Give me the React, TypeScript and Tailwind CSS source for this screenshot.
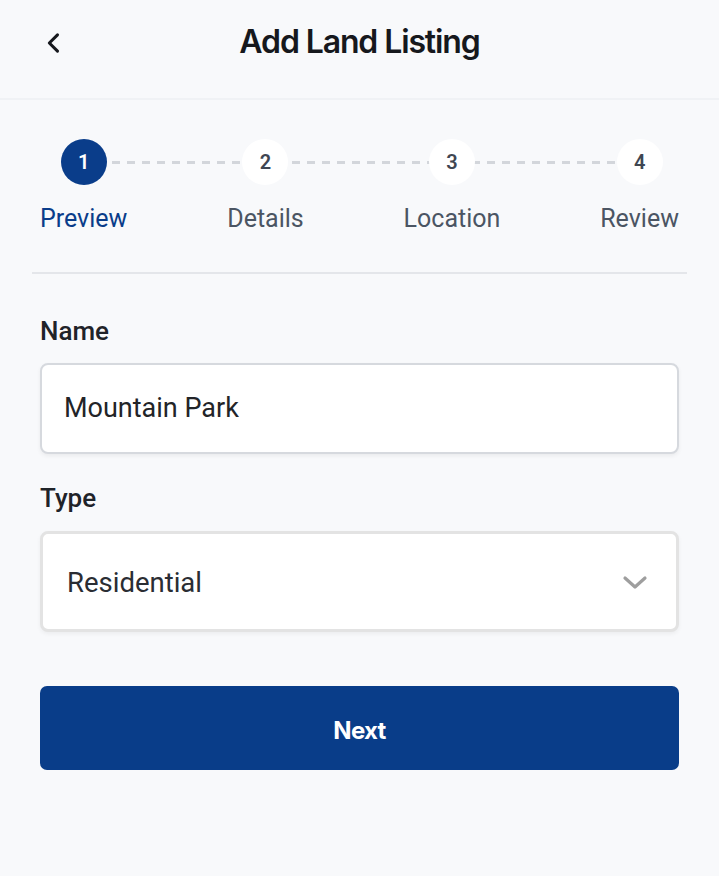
import React from "react";

const steps = [
  { n: 1, label: "Preview", active: true },
  { n: 2, label: "Details", active: false },
  { n: 3, label: "Location", active: false },
  { n: 4, label: "Review", active: false },
];

export default function App() {
  return (
    <div className="min-h-[876px] w-full bg-[#f8f9fb] font-['Roboto',_sans-serif] text-[#1f2329]">
      {/* Header */}
      <header className="relative flex h-[100px] items-center justify-center border-b-2 border-[#f0f2f5]">
        <button className="absolute left-[40px] top-[29px] flex h-[28px] w-[28px] items-center justify-center text-[#16181d]">
          <svg width="28" height="28" viewBox="0 0 24 24" fill="none" stroke="currentColor" strokeWidth="2.6" strokeLinecap="round" strokeLinejoin="round">
            <path d="M15 5l-7 7 7 7" />
          </svg>
        </button>
        <h1 className="-mt-[14px] font-['Inter',_sans-serif] text-[32px] font-semibold tracking-[-0.035em] text-[#16181d]">
          Add Land Listing
        </h1>
      </header>

      {/* Stepper */}
      <section className="px-[32px] pt-[39px]">
        <div className="relative px-[8px]">
          <div className="absolute left-[80px] right-[70px] top-[22px] h-[3px] bg-[repeating-linear-gradient(to_right,#d3d6db_0px,#d3d6db_8px,transparent_8px,transparent_15px)]" />
          <div className="relative flex justify-between">
            {steps.map((s) => (
              <div key={s.n} className="flex flex-col items-center">
                <div
                  className={
                    s.active
                      ? "flex h-[46px] w-[46px] items-center justify-center rounded-full bg-[#0a3d8a] text-[20px] font-semibold text-white"
                      : "flex h-[46px] w-[46px] items-center justify-center rounded-full bg-white text-[20px] font-semibold text-[#3f4652]"
                  }
                >
                  {s.n}
                </div>
                <div
                  className={
                    s.active
                      ? "mt-[18px] text-[25px] leading-[32px] text-[#0a3d8a]"
                      : "mt-[18px] text-[25px] leading-[32px] text-[#4b5563]"
                  }
                >
                  {s.label}
                </div>
              </div>
            ))}
          </div>
        </div>
        <div className="mt-[37px] h-[2px] bg-[#e4e6ea]" />
      </section>

      {/* Form */}
      <section className="px-[40px]">
        <label className="mt-[41px] block text-[26px] font-medium leading-[32px] text-[#1f2329]">Name</label>
        <div className="mt-[16px] flex h-[91px] items-center rounded-[8px] border-2 border-[#d6d9de] bg-white px-[22px] shadow-[0_2px_4px_rgba(0,0,0,0.06)]">
          <span className="text-[27px] text-[#222428]">Mountain Park</span>
        </div>

        <label className="mt-[28px] block text-[26px] font-medium leading-[32px] text-[#1f2329]">Type</label>
        <div className="mt-[17px] flex h-[101px] items-center justify-between rounded-[8px] border-[3px] border-[#e3e3e3] bg-white pl-[24px] pr-[28px] pt-[3px] shadow-[0_2px_4px_rgba(0,0,0,0.05)]">
          <span className="text-[27.5px] text-[#2a2d33]">Residential</span>
          <svg width="26" height="16" viewBox="0 0 26 16" fill="none" stroke="#9e9e9e" strokeWidth="3.2" strokeLinecap="round" strokeLinejoin="round">
            <path d="M3 3l10 9 10-9" />
          </svg>
        </div>

        <button className="mt-[54px] flex h-[84px] w-full items-center justify-center rounded-[7px] bg-[#093d89] pt-[5px] text-[24px] font-bold text-white">
          <span className="font-['Inter',_sans-serif] tracking-[-0.03em]">Next</span>
        </button>
      </section>
    </div>
  );
}
